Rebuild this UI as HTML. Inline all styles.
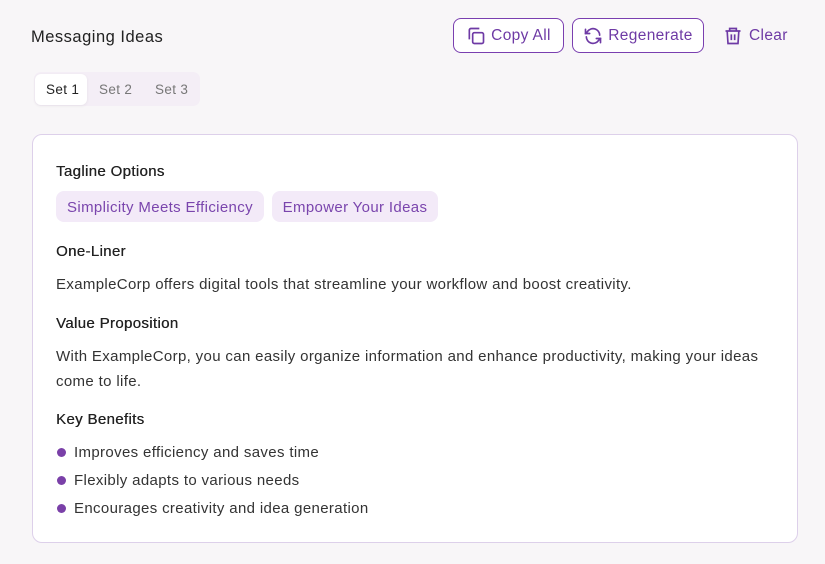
<!DOCTYPE html>
<html><head><style>
body{margin:0;width:825px;height:564px;background:#f8f6f8;font-family:"Liberation Sans",sans-serif;position:relative;overflow:hidden;color:#222;letter-spacing:0.35px}
.a{position:absolute;white-space:nowrap}
.btn{position:absolute;border:1.5px solid #7a3fb0;border-radius:8px;color:#6e3aa5;font-size:15.5px;display:flex;align-items:center;justify-content:center;gap:5px;box-sizing:border-box;background:#fff}
.h{font-size:15px;color:#222;text-shadow:0.3px 0 0 #222}
.t{font-size:15px;color:#333}
.chip{position:absolute;top:191px;height:31px;background:#f3eaf8;border-radius:8px;color:#7a45ad;font-size:15px;line-height:33px;text-align:center}
.dot{position:absolute;left:57px;width:9px;height:9px;border-radius:50%;background:#7a40a8}
</style></head><body>
<div class="a" style="left:31px;top:28px;font-size:16.5px;color:#222;letter-spacing:0.5px">Messaging Ideas</div>
<div class="btn" style="left:453px;top:18px;width:111px;height:35px"><svg width="20" height="20" viewBox="0 0 24 24" fill="none" stroke="#6e3aa5" stroke-width="2"><rect x="8" y="8" width="13" height="13" rx="2"/><path d="M4 16V5a2 2 0 0 1 2-2h10"/></svg>Copy All</div>
<div class="btn" style="left:572px;top:18px;width:132px;height:35px"><svg width="20" height="20" viewBox="0 0 24 24" fill="none" stroke="#6e3aa5" stroke-width="2" stroke-linecap="round"><path d="M20 11a8 8 0 0 0-14.5-4.5L3 9"/><path d="M3 4v5h5"/><path d="M4 13a8 8 0 0 0 14.5 4.5L21 15"/><path d="M21 20v-5h-5"/></svg>Regenerate</div>
<div class="a" style="left:723px;top:26px;color:#6e3aa5;font-size:15.5px;display:flex;align-items:center;gap:6px"><svg width="20" height="20" viewBox="0 0 24 24" fill="none" stroke="#6e3aa5" stroke-width="2"><path d="M3 6h18M8 6V3h8v3M5 6l1 15h12l1-15M10 10v7M14 10v7"/></svg>Clear</div>
<div class="a" style="left:34px;top:72px;width:166px;height:34px;background:#f4eef6;border-radius:7px"></div>
<div class="a" style="left:35px;top:74px;width:52px;height:31px;background:#fff;border-radius:6px;box-shadow:0 1px 3px rgba(0,0,0,.06)"></div>
<div class="a" style="left:46px;top:82px;font-size:13.5px;color:#222">Set 1</div>
<div class="a" style="left:99px;top:82px;font-size:13.5px;color:#777">Set 2</div>
<div class="a" style="left:155px;top:82px;font-size:13.5px;color:#777">Set 3</div>
<div class="a" style="left:32px;top:134px;width:766px;height:409px;background:#fff;border:1px solid #ddd0ea;border-radius:10px;box-sizing:border-box"></div>
<div class="a h" style="left:56px;top:163px">Tagline Options</div>
<div class="chip" style="left:56px;width:208px">Simplicity Meets Efficiency</div>
<div class="chip" style="left:272px;width:166px">Empower Your Ideas</div>
<div class="a h" style="left:56px;top:243px">One-Liner</div>
<div class="a t" style="left:56px;top:276px">ExampleCorp offers digital tools that streamline your workflow and boost creativity.</div>
<div class="a h" style="left:56px;top:315px">Value Proposition</div>
<div class="a t" style="left:56px;top:348px">With ExampleCorp, you can easily organize information and enhance productivity, making your ideas</div>
<div class="a t" style="left:56px;top:373px">come to life.</div>
<div class="a h" style="left:56px;top:411px">Key Benefits</div>
<div class="dot" style="top:448px"></div><div class="a t" style="left:74px;top:444px">Improves efficiency and saves time</div>
<div class="dot" style="top:476px"></div><div class="a t" style="left:74px;top:472px">Flexibly adapts to various needs</div>
<div class="dot" style="top:504px"></div><div class="a t" style="left:74px;top:500px">Encourages creativity and idea generation</div>
</body></html>
